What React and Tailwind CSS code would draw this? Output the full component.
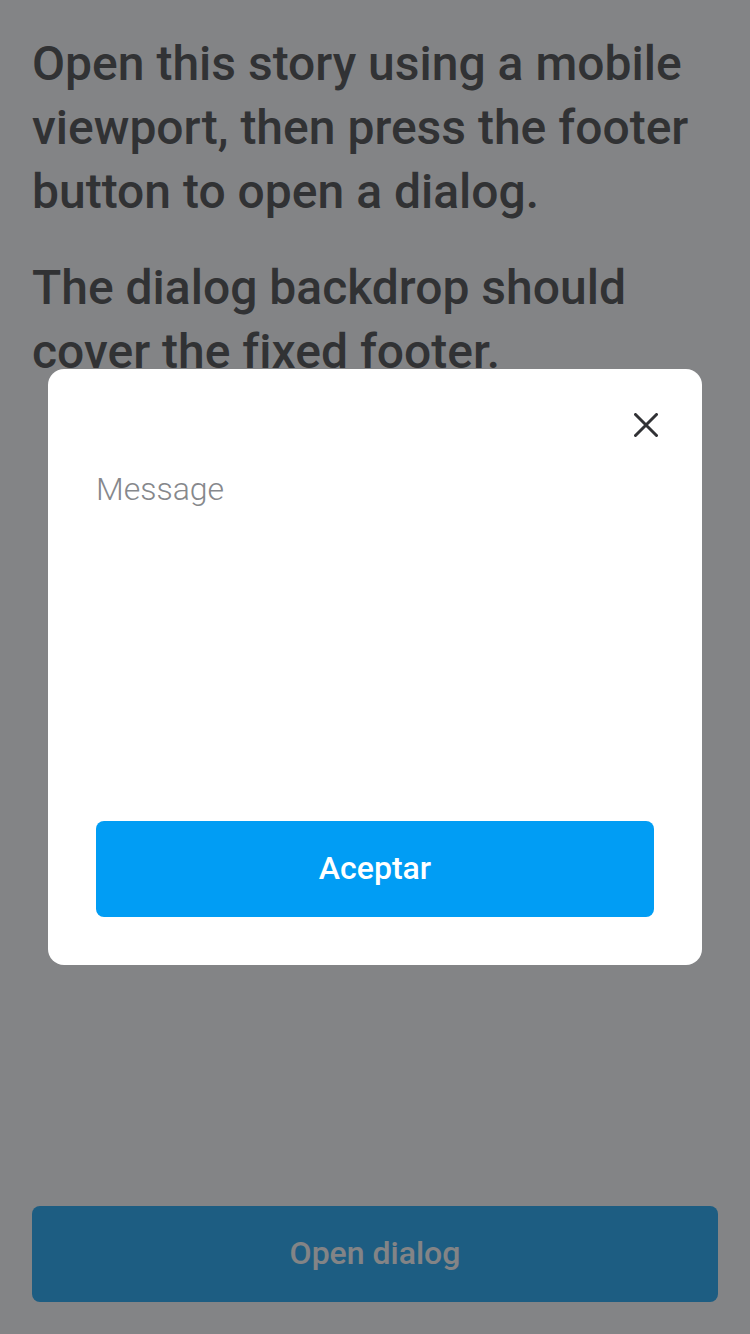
export default function App() {
  return (
    <div className="flex min-h-screen flex-col bg-white font-['Roboto',sans-serif] text-[#333333] [font-variant-ligatures:none]">
      <main className="flex flex-1 flex-col gap-8 p-8 text-5xl font-medium">
        <h2 className="leading-[64px]">
          Open this story using a mobile viewport, then press the footer button to open a dialog.
        </h2>
        <h2 className="leading-[64px]">The dialog backdrop should cover the fixed footer.</h2>
      </main>
      <footer className="p-8">
        <button type="button" className="h-24 w-full rounded-lg bg-[#019df4] pb-0.5 text-[32px] leading-10 font-medium text-white">
          Open dialog
        </button>
      </footer>
      <div className="fixed inset-0 flex items-center justify-center bg-[#313235]/60 p-12">
        <section
          role="dialog"
          aria-modal="true"
          aria-label="Message"
          className="flex w-full flex-col rounded-2xl bg-white px-12 pt-8 pb-12"
        >
          <button type="button" aria-label="Close" className="-mr-4 flex size-12 items-center justify-center self-end">
            <svg viewBox="0 0 24 24" className="size-6" fill="none" stroke="#313235" strokeWidth="3" strokeLinecap="round">
              <path d="M1.5 1.5 22.5 22.5M22.5 1.5 1.5 22.5" />
            </svg>
          </button>
          <p className="mt-4 min-h-80 text-[32px] leading-[48px] font-light text-[#86888c]">Message</p>
          <button type="button" className="mt-9 h-24 w-full rounded-lg bg-[#019df4] pb-0.5 text-[32px] leading-10 font-medium text-white">
            Aceptar
          </button>
        </section>
      </div>
    </div>
  );
}
